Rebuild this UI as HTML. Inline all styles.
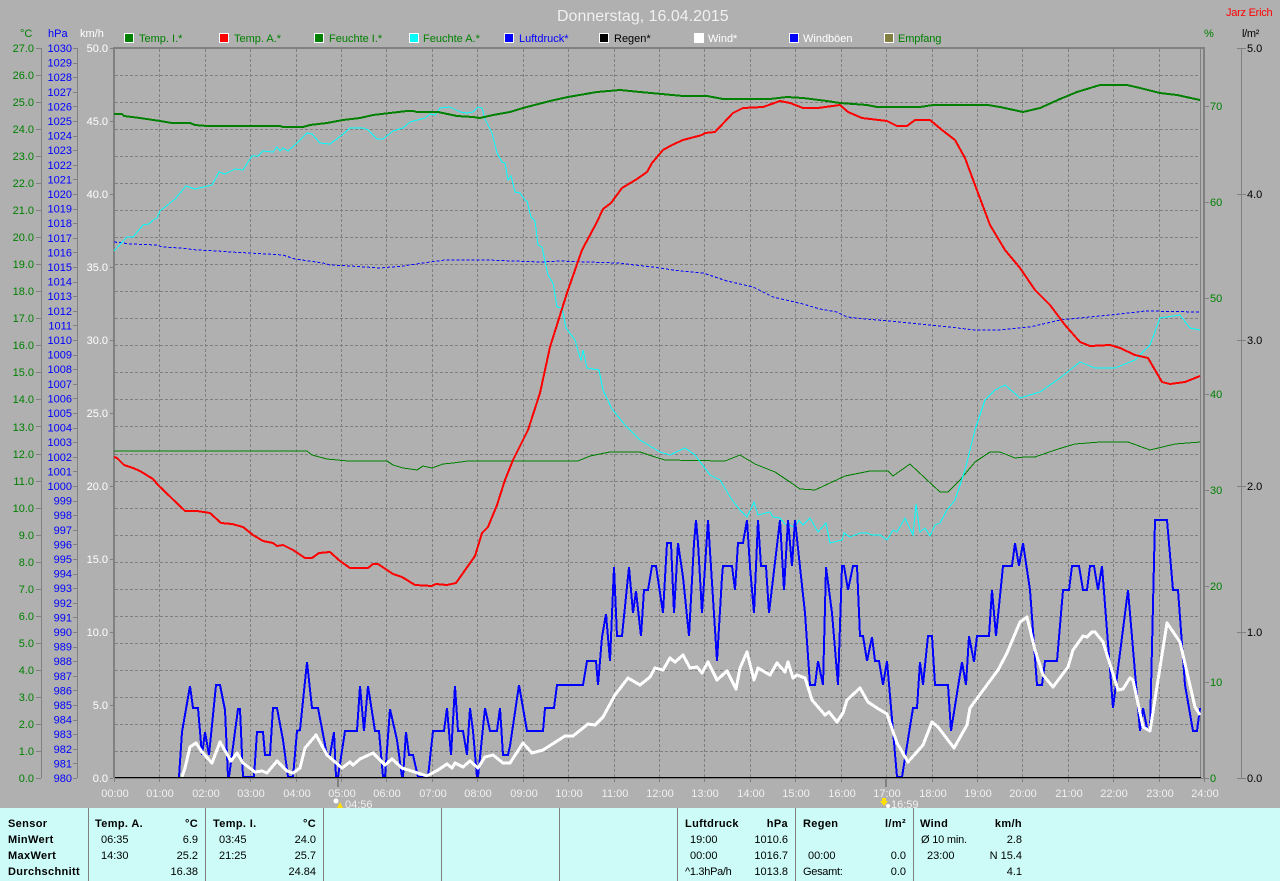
<!DOCTYPE html>
<html><head><meta charset="utf-8"><title>Donnerstag, 16.04.2015</title>
<style>
html,body{margin:0;padding:0;background:#b0b0b0;width:1280px;height:881px;overflow:hidden}
svg{display:block;position:absolute;left:0;top:0;font-family:"Liberation Sans",sans-serif;font-size:11px}
.c{shape-rendering:crispEdges;fill:none}
.b{font-weight:bold;letter-spacing:.35px}
</style></head><body>
<svg width="1280" height="881" viewBox="0 0 1280 881" xmlns="http://www.w3.org/2000/svg">
<rect width="1280" height="881" fill="#b0b0b0"/>
<text x="557" y="21" font-size="16" fill="#f0f0f0" style="font-size:16px">Donnerstag, 16.04.2015</text>
<text x="1226" y="16" fill="#ff0000" letter-spacing="-.25">Jarz Erich</text>

<!-- legend -->
<g class="c" stroke="#fff" stroke-width="1">
<rect x="124.500" y="33.500" width="9" height="9" fill="#008000"/>
<rect x="219.500" y="33.500" width="9" height="9" fill="#ff0000"/>
<rect x="314.500" y="33.500" width="9" height="9" fill="#008000"/>
<rect x="409.500" y="33.500" width="9" height="9" fill="#00ffff"/>
<rect x="504.500" y="33.500" width="9" height="9" fill="#0000ff"/>
<rect x="599.500" y="33.500" width="9" height="9" fill="#000000"/>
<rect x="694.500" y="33.500" width="9" height="9" fill="#ffffff"/>
<rect x="789.500" y="33.500" width="9" height="9" fill="#0000ff"/>
<rect x="884.500" y="33.500" width="9" height="9" fill="#808040"/>
</g>
<g>
<text x="139" y="42" fill="#008000">Temp. I.*</text>
<text x="234" y="42" fill="#008000">Temp. A.*</text>
<text x="329" y="42" fill="#008000">Feuchte I.*</text>
<text x="423" y="42" fill="#008000">Feuchte A.*</text>
<text x="519" y="42" fill="#0000ff">Luftdruck*</text>
<text x="614" y="42" fill="#000">Regen*</text>
<text x="708" y="42" fill="#fff">Wind*</text>
<text x="803" y="42" fill="#fff">Windböen</text>
<text x="898" y="42" fill="#008000" letter-spacing="-.1">Empfang</text>
</g>
<text x="20" y="37" fill="#008000">°C</text>
<text x="48" y="37" fill="#0000ff">hPa</text>
<text x="80" y="37" fill="#fff">km/h</text>
<text x="1204" y="37" fill="#008000">%</text>
<text x="1242" y="37" fill="#000" letter-spacing="-.3">l/m²</text>

<!-- grid -->
<path class="c" stroke="#808080" stroke-dasharray="3 2" d="M115 75.500H1200M115 102.500H1200M115 129.500H1200M115 156.500H1200M115 183.500H1200M115 210.500H1200M115 237.500H1200M115 264.500H1200M115 291.500H1200M115 318.500H1200M115 345.500H1200M115 372.500H1200M115 399.500H1200M115 426.500H1200M115 454.500H1200M115 481.500H1200M115 508.500H1200M115 535.500H1200M115 562.500H1200M115 589.500H1200M115 616.500H1200M115 643.500H1200M115 670.500H1200M115 697.500H1200M115 724.500H1200M115 751.500H1200
M159.500 49V777M205.500 49V777M250.500 49V777M296.500 49V777M341.500 49V777M386.500 49V777M432.500 49V777M477.500 49V777M523.500 49V777M568.500 49V777M614.500 49V777M659.500 49V777M704.500 49V777M750.500 49V777M795.500 49V777M841.500 49V777M886.500 49V777M932.500 49V777M977.500 49V777M1022.500 49V777M1068.500 49V777M1113.500 49V777M1159.500 49V777"/>

<!-- frame and axes -->
<g class="c" stroke="#808080">
<path stroke-width="2" d="M113 48H1205M114 47V778M1204 47V778"/>
<path d="M1200.500 48V778M41.500 48V778M77.500 48V778M1241.500 48V778M114 778.500H1204"/>
<path d="M36 48.500h5M36 75.500h5M36 102.500h5M36 129.500h5M36 156.500h5M36 183.500h5M36 210.500h5M36 237.500h5M36 264.500h5M36 291.500h5M36 318.500h5M36 345.500h5M36 372.500h5M36 399.500h5M36 426.500h5M36 454.500h5M36 481.500h5M36 508.500h5M36 535.500h5M36 562.500h5M36 589.500h5M36 616.500h5M36 643.500h5M36 670.500h5M36 697.500h5M36 724.500h5M36 751.500h5M36 778.500h5"/>
<path d="M73 48.500h4M73 63.500h4M73 77.500h4M73 92.500h4M73 106.500h4M73 121.500h4M73 136.500h4M73 150.500h4M73 165.500h4M73 179.500h4M73 194.500h4M73 209.500h4M73 223.500h4M73 238.500h4M73 252.500h4M73 267.500h4M73 282.500h4M73 296.500h4M73 311.500h4M73 325.500h4M73 340.500h4M73 355.500h4M73 369.500h4M73 384.500h4M73 398.500h4M73 413.500h4M73 428.500h4M73 442.500h4M73 457.500h4M73 471.500h4M73 486.500h4M73 501.500h4M73 515.500h4M73 530.500h4M73 544.500h4M73 559.500h4M73 574.500h4M73 588.500h4M73 603.500h4M73 617.500h4M73 632.500h4M73 647.500h4M73 661.500h4M73 676.500h4M73 690.500h4M73 705.500h4M73 720.500h4M73 734.500h4M73 749.500h4M73 763.500h4M73 778.500h4"/>
<path d="M110 48.500h3M110 121.500h3M110 194.500h3M110 267.500h3M110 340.500h3M110 413.500h3M110 486.500h3M110 559.500h3M110 632.500h3M110 705.500h3M110 778.500h3"/>
<path d="M1205 106.500h4M1205 202.500h4M1205 298.500h4M1205 394.500h4M1205 490.500h4M1205 586.500h4M1205 682.500h4M1205 778.500h4"/>
<path d="M1237 48.500h9M1237 194.500h9M1237 340.500h9M1237 486.500h9M1237 632.500h9M1237 778.500h9"/>
<path d="M114.500 778v4M159.500 778v4M205.500 778v4M250.500 778v4M296.500 778v4M341.500 778v4M386.500 778v4M432.500 778v4M477.500 778v4M523.500 778v4M568.500 778v4M614.500 778v4M659.500 778v4M704.500 778v4M750.500 778v4M795.500 778v4M841.500 778v4M886.500 778v4M932.500 778v4M977.500 778v4M1022.500 778v4M1068.500 778v4M1113.500 778v4M1159.500 778v4M1204.500 778v4"/>
<path stroke-width="2" d="M338 778v9M886 778v9"/>
</g>

<!-- curves -->
<polyline class="c" stroke="#0000ff" stroke-dasharray="3 2" points="114,242 123,243 130,244 157,245 162,247 180,248 197,250 217,251 230,252 250,253 283,255 295,259 323,263 330,265 350,266 380,268 403,266 423,263 445,260 487,260 540,262 560,261 617,263 653,267 680,271 703,273 727,281 753,287 773,297 803,304 820,309 837,312 847,317 866,319 900,322 940,326 975,330 1000,330 1030,327 1060,320 1090,317 1120,314 1145,311 1200,312"/>

<polyline class="c" stroke="#008000" points="114,451 307,451 312,455 327,459 348,461 387,461 393,465 403,468 417,470 423,466 432,468 443,464 453,463 468,461 578,461 590,456 610,452 640,452 655,457 665,460 725,461 740,455 755,464 775,472 790,482 800,489 815,490 830,483 845,476 870,471 888,471 893,476 910,464 925,478 940,492 948,492 960,480 975,462 990,452 1000,452 1015,458 1025,457 1035,457 1055,450 1075,444 1100,442 1128,442 1150,450 1175,444 1200,442"/>

<polyline class="c" stroke="#00ffff" points="114,251 127,237 133,237 143,225 149,224 153,220 157,218 160,211 175,199 186,186 195,189 212,185 219,172 225,174 235,169 243,170 252,156 258,156 263,151 273,152 277,147 280,151 283,148 288,151 297,143 307,133 312,134 320,143 330,144 342,135 350,128 363,128 368,130 377,139 383,139 393,131 403,128 410,122 425,118 430,114 435,115 440,108 450,107 460,112 467,113 473,112 478,107 482,108 485,119 492,133 497,153 502,162 505,163 508,180 511,176 515,192 520,193 525,200 527,201 531,217 535,221 538,245 542,247 548,275 553,283 557,307 562,308 566,328 575,340 581,361 583,350 587,368 599,370 603,390 612,409 625,425 640,440 660,452 670,455 685,448 695,455 710,475 720,480 732,500 740,510 747,517 754,502 758,515 770,512 773,517 780,518 785,524 795,527 799,520 803,525 810,518 818,532 826,523 830,543 842,540 844,533 850,537 860,533 867,533 872,535 880,535 887,540 893,530 897,532 905,518 913,535 916,504 920,532 925,528 930,536 935,525 940,523 947,510 955,500 965,470 975,430 985,400 995,390 1005,385 1020,398 1040,392 1060,378 1080,362 1095,368 1115,368 1135,360 1150,345 1160,318 1180,315 1190,328 1200,330"/>

<polyline class="c" stroke="#0000ff" stroke-width="2" points="179,777 182,732 190,686 193,708 198,708 202,755 205,732 209,755 216,685 220,685 225,710 228,777 229,777 238,709 240,709 243,777 254,777 257,732 263,732 265,755 270,755 273,708 277,708 283,740 288,777 293,777 297,731 300,730 307,662 312,708 318,708 327,755 330,755 334,732 336,777 338,777 345,731 357,731 360,686 364,731 368,686 375,731 379,731 383,777 385,777 390,709 397,740 402,777 403,777 406,732 409,755 413,755 418,777 428,777 433,731 444,731 447,708 451,755 455,686 458,731 463,731 467,755 470,708 473,731 477,777 478,777 485,708 490,731 497,731 500,708 503,755 508,755 510,746 519,685 527,731 543,731 545,708 554,708 557,685 583,685 587,661 596,661 598,685 602,637 606,614 610,661 614,567 617,636 622,636 629,567 633,613 636,591 641,636 644,590 648,590 652,566 656,566 663,613 667,543 671,543 674,613 678,543 683,577 689,636 694,543 696,520 698,543 702,613 708,520 717,661 722,577 723,566 732,566 735,590 738,543 743,543 747,520 750,567 754,613 758,520 761,566 766,566 769,613 780,520 784,590 788,520 792,566 795,520 800,567 805,613 810,685 815,685 818,661 823,685 826,567 832,613 838,685 842,566 844,566 848,590 853,566 857,566 860,636 863,636 867,661 872,637 875,661 879,661 883,685 887,661 897,777 902,777 913,708 917,708 920,662 923,685 928,636 932,636 935,685 948,685 951,731 962,662 966,685 969,636 974,662 977,636 989,636 992,590 996,636 1003,566 1012,566 1015,543 1019,566 1023,543 1030,590 1037,685 1042,685 1045,661 1057,661 1063,590 1069,590 1072,566 1079,566 1083,590 1087,590 1090,566 1094,566 1098,590 1102,566 1113,708 1128,590 1140,731 1143,708 1147,728 1150,731 1155,520 1167,520 1173,590 1178,590 1185,685 1193,731 1197,731 1200,708"/>

<polyline class="c" stroke="#ffffff" stroke-width="3" stroke-linejoin="round" points="182,777 185,768 190,747 196,743 202,752 212,763 220,742 231,761 237,753 243,763 255,772 262,771 267,773 277,761 287,771 293,773 300,768 305,748 316,735 327,755 342,768 350,762 353,765 360,759 373,753 385,765 392,759 402,768 427,776 438,770 447,764 452,768 455,763 463,767 470,761 478,768 485,757 493,755 503,763 510,763 523,743 532,753 543,750 565,736 573,736 588,724 595,725 603,717 615,695 628,678 640,685 650,677 655,668 663,670 670,658 675,662 683,655 690,668 697,667 702,673 708,662 717,680 727,671 736,689 740,668 747,652 754,680 758,668 770,675 777,663 785,672 788,662 793,678 797,675 805,678 812,700 825,715 829,712 837,722 843,713 847,700 860,688 868,702 877,708 887,714 897,743 908,762 923,745 932,722 938,727 954,748 967,725 970,708 998,670 1007,653 1020,622 1027,617 1035,650 1043,675 1053,687 1068,667 1073,650 1083,636 1087,637 1092,632 1095,632 1103,642 1118,690 1123,689 1130,678 1133,680 1143,727 1150,731 1167,623 1180,642 1195,707 1200,715"/>

<polyline class="c" stroke="#008000" stroke-width="2" points="114,114 122,114 124,116 140,118 160,121 172,123 190,123 195,125 207,126 280,126 283,127 303,127 310,125 327,123 343,120 360,118 373,115 390,113 407,111 413,111 417,112 438,112 457,116 473,117 480,118 493,115 510,112 523,108 550,101 568,97 597,92 620,90 640,92 683,96 707,96 723,99 770,99 787,97 803,98 827,101 840,103 867,105 877,107 920,107 933,105 988,105 1000,107 1023,112 1040,108 1060,99 1077,92 1100,85 1127,85 1140,88 1160,93 1177,95 1200,100"/>

<polyline class="c" stroke="#ff0000" stroke-width="2" points="114,457 117,458 124,465 133,468 140,471 153,479 158,485 185,511 197,511 210,513 221,523 232,524 243,527 253,535 263,541 273,543 277,546 283,545 293,550 305,558 312,558 319,553 330,552 340,561 350,568 368,568 373,564 378,564 393,574 402,577 415,585 432,586 436,584 447,585 456,583 475,556 482,533 488,527 497,505 505,480 513,460 528,430 540,393 550,347 567,293 582,250 597,222 603,209 611,203 622,188 637,179 647,172 652,163 663,150 672,145 683,140 702,135 705,133 715,132 733,113 743,108 763,107 780,101 790,103 803,108 818,108 840,105 848,112 862,118 887,121 897,126 907,126 915,120 930,120 942,130 955,140 965,158 975,185 990,225 1005,250 1020,268 1035,290 1050,305 1065,325 1080,342 1090,346 1110,345 1120,348 1135,355 1148,358 1162,382 1170,384 1185,382 1200,376"/>

<path class="c" stroke="#000" d="M115 777.500H1201"/>

<!-- °C labels -->
<g fill="#008000" text-anchor="end">
<text x="34" y="52">27.0</text><text x="34" y="79">26.0</text><text x="34" y="106">25.0</text><text x="34" y="133">24.0</text><text x="34" y="160">23.0</text><text x="34" y="187">22.0</text><text x="34" y="214">21.0</text><text x="34" y="241">20.0</text><text x="34" y="268">19.0</text><text x="34" y="295">18.0</text><text x="34" y="322">17.0</text><text x="34" y="349">16.0</text><text x="34" y="376">15.0</text><text x="34" y="403">14.0</text><text x="34" y="431">13.0</text><text x="34" y="458">12.0</text><text x="34" y="485">11.0</text><text x="34" y="512">10.0</text><text x="34" y="539">9.0</text><text x="34" y="566">8.0</text><text x="34" y="593">7.0</text><text x="34" y="620">6.0</text><text x="34" y="647">5.0</text><text x="34" y="674">4.0</text><text x="34" y="701">3.0</text><text x="34" y="728">2.0</text><text x="34" y="755">1.0</text><text x="34" y="782">0.0</text>
</g>
<!-- hPa labels -->
<g fill="#0000ff" text-anchor="end">
<text x="72" y="52">1030</text><text x="72" y="66.600">1029</text><text x="72" y="81.200">1028</text><text x="72" y="95.800">1027</text><text x="72" y="110.400">1026</text><text x="72" y="125">1025</text><text x="72" y="139.600">1024</text><text x="72" y="154.200">1023</text><text x="72" y="168.800">1022</text><text x="72" y="183.400">1021</text><text x="72" y="198">1020</text><text x="72" y="212.600">1019</text><text x="72" y="227.200">1018</text><text x="72" y="241.800">1017</text><text x="72" y="256.400">1016</text><text x="72" y="271">1015</text><text x="72" y="285.600">1014</text><text x="72" y="300.200">1013</text><text x="72" y="314.800">1012</text><text x="72" y="329.400">1011</text><text x="72" y="344">1010</text><text x="72" y="358.600">1009</text><text x="72" y="373.200">1008</text><text x="72" y="387.800">1007</text><text x="72" y="402.400">1006</text><text x="72" y="417">1005</text><text x="72" y="431.600">1004</text><text x="72" y="446.200">1003</text><text x="72" y="460.800">1002</text><text x="72" y="475.400">1001</text><text x="72" y="490">1000</text><text x="72" y="504.600">999</text><text x="72" y="519.200">998</text><text x="72" y="533.800">997</text><text x="72" y="548.400">996</text><text x="72" y="563">995</text><text x="72" y="577.600">994</text><text x="72" y="592.200">993</text><text x="72" y="606.800">992</text><text x="72" y="621.400">991</text><text x="72" y="636">990</text><text x="72" y="650.600">989</text><text x="72" y="665.200">988</text><text x="72" y="679.800">987</text><text x="72" y="694.400">986</text><text x="72" y="709">985</text><text x="72" y="723.600">984</text><text x="72" y="738.200">983</text><text x="72" y="752.800">982</text><text x="72" y="767.400">981</text><text x="72" y="782">980</text>
</g>
<!-- km/h labels -->
<g fill="#fff" text-anchor="end">
<text x="108" y="52">50.0</text><text x="108" y="125">45.0</text><text x="108" y="198">40.0</text><text x="108" y="271">35.0</text><text x="108" y="344">30.0</text><text x="108" y="417">25.0</text><text x="108" y="490">20.0</text><text x="108" y="563">15.0</text><text x="108" y="636">10.0</text><text x="108" y="709">5.0</text><text x="108" y="782">0.0</text>
</g>
<!-- % labels -->
<g fill="#008000">
<text x="1210" y="110">70</text><text x="1210" y="206">60</text><text x="1210" y="302">50</text><text x="1210" y="398">40</text><text x="1210" y="494">30</text><text x="1210" y="590">20</text><text x="1210" y="686">10</text><text x="1210" y="782">0</text>
</g>
<!-- l/m2 labels -->
<g fill="#000">
<text x="1247" y="52">5.0</text><text x="1247" y="198">4.0</text><text x="1247" y="344">3.0</text><text x="1247" y="490">2.0</text><text x="1247" y="636">1.0</text><text x="1247" y="782">0.0</text>
</g>
<!-- hour labels -->
<g fill="#f0f0f0" text-anchor="middle">
<text x="115" y="797">00:00</text><text x="160" y="797">01:00</text><text x="206" y="797">02:00</text><text x="251" y="797">03:00</text><text x="297" y="797">04:00</text><text x="342" y="797">05:00</text><text x="387" y="797">06:00</text><text x="433" y="797">07:00</text><text x="478" y="797">08:00</text><text x="524" y="797">09:00</text><text x="569" y="797">10:00</text><text x="615" y="797">11:00</text><text x="660" y="797">12:00</text><text x="705" y="797">13:00</text><text x="751" y="797">14:00</text><text x="796" y="797">15:00</text><text x="842" y="797">16:00</text><text x="887" y="797">17:00</text><text x="933" y="797">18:00</text><text x="978" y="797">19:00</text><text x="1023" y="797">20:00</text><text x="1069" y="797">21:00</text><text x="1114" y="797">22:00</text><text x="1160" y="797">23:00</text><text x="1205" y="797">24:00</text>
</g>

<!-- sun markers -->
<circle cx="336" cy="801" r="2.500" fill="#fff"/>
<path d="M340 802l3 6h-6z" fill="#ffe000"/>
<text x="345" y="808" fill="#f0f0f0">04:56</text>
<path d="M882 798h4v3h2l-4 5-4-5h2z" fill="#ffe000"/>
<circle cx="888" cy="806" r="2" fill="#fff"/>
<text x="891" y="808" fill="#f0f0f0">16:59</text>

<!-- stats panel -->
<rect x="0" y="808" width="1280" height="73" fill="#ccfbf8"/>
<path class="c" stroke="#808080" d="M88.500 808V881M205.500 808V881M323.500 808V881M441.500 808V881M559.500 808V881M677.500 808V881M795.500 808V881M913.500 808V881"/>
<g fill="#000">
<g class="b">
<text x="8" y="827">Sensor</text><text x="8" y="843">MinWert</text><text x="8" y="859">MaxWert</text><text x="8" y="875">Durchschnitt</text>
<text x="95" y="827">Temp. A.</text><text x="198" y="827" text-anchor="end">°C</text>
<text x="213" y="827">Temp. I.</text><text x="316" y="827" text-anchor="end">°C</text>
<text x="685" y="827">Luftdruck</text><text x="788" y="827" text-anchor="end">hPa</text>
<text x="803" y="827">Regen</text><text x="906" y="827" text-anchor="end">l/m²</text>
<text x="920" y="827">Wind</text><text x="1022" y="827" text-anchor="end">km/h</text>
</g>
<text x="101" y="843">06:35</text><text x="198" y="843" text-anchor="end">6.9</text>
<text x="101" y="859">14:30</text><text x="198" y="859" text-anchor="end">25.2</text>
<text x="198" y="875" text-anchor="end">16.38</text>
<text x="219" y="843">03:45</text><text x="316" y="843" text-anchor="end">24.0</text>
<text x="219" y="859">21:25</text><text x="316" y="859" text-anchor="end">25.7</text>
<text x="316" y="875" text-anchor="end">24.84</text>
<text x="690" y="843">19:00</text><text x="788" y="843" text-anchor="end">1010.6</text>
<text x="690" y="859">00:00</text><text x="788" y="859" text-anchor="end">1016.7</text>
<text x="685" y="875" letter-spacing="-.3">^1.3hPa/h</text><text x="788" y="875" text-anchor="end">1013.8</text>
<text x="808" y="859">00:00</text><text x="906" y="859" text-anchor="end">0.0</text>
<text x="803" y="875" letter-spacing="-.3">Gesamt:</text><text x="906" y="875" text-anchor="end">0.0</text>
<text x="921" y="843" letter-spacing="-.2">Ø 10 min.</text><text x="1022" y="843" text-anchor="end">2.8</text>
<text x="927" y="859">23:00</text><text x="1022" y="859" text-anchor="end">N 15.4</text>
<text x="1022" y="875" text-anchor="end">4.1</text>
</g>
</svg>
</body></html>
